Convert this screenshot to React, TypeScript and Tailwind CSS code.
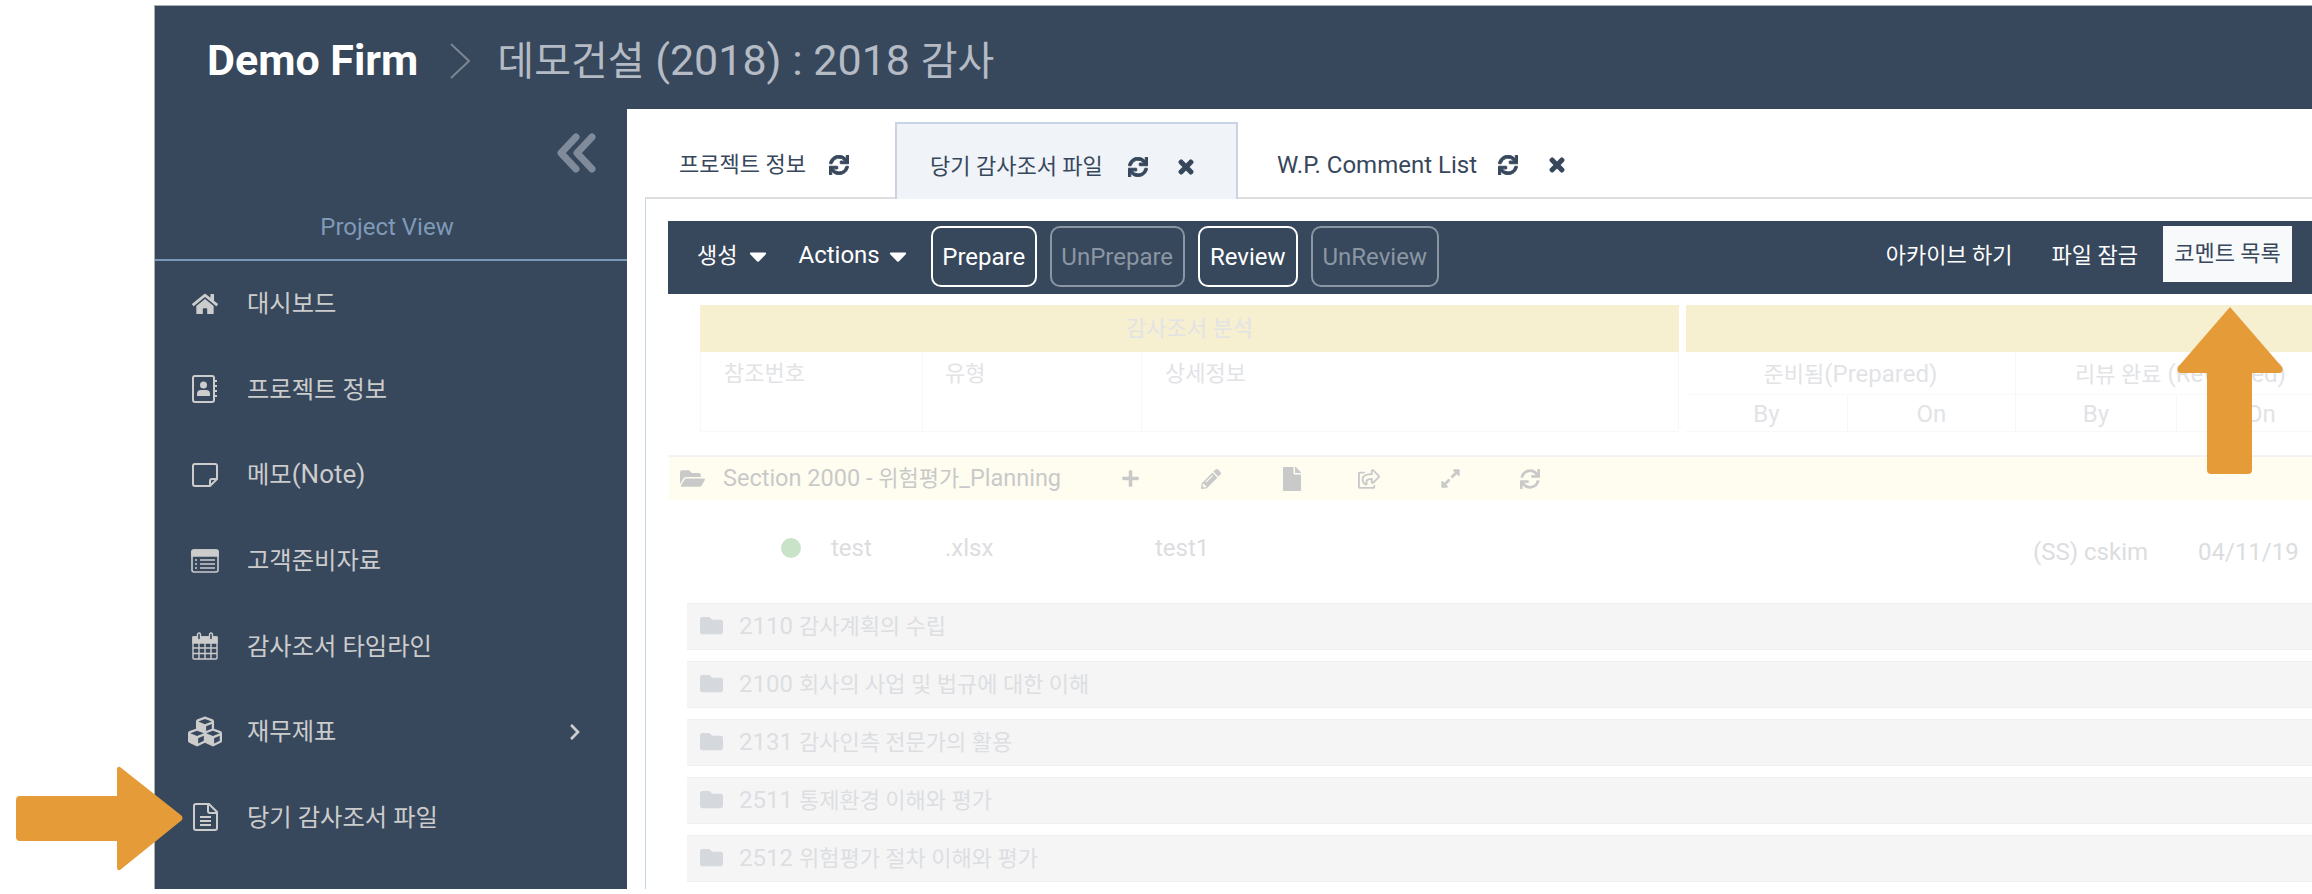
import {
  FaCaretDown,
  FaChevronRight,
  FaCubes,
  FaExpandAlt,
  FaFile,
  FaFolder,
  FaFolderOpen,
  FaHome,
  FaPencilAlt,
  FaPlus,
  FaRegShareSquare,
  FaSync,
  FaTimes,
} from 'react-icons/fa';

// the hangul in the reference runs smaller than the latin next to it
function Mix({ text, latin }: { text: string; latin: string }) {
  return (
    <>
      {text.split(/([가-힣]+(?: [가-힣]+)*)/).map((part, i) =>
        /[가-힣]/.test(part) ? <span key={i}>{part}</span> : <span key={i} className={latin}>{part}</span>
      )}
    </>
  );
}

function BookIcon() {
  return (
    <svg className="h-[28px] w-[26px]" viewBox="0 0 26 28" fill="none" stroke="currentColor" strokeWidth="2">
      <rect x="1" y="1" width="21" height="26" rx="2" />
      <path d="M22 6h3M22 11h3M22 16h3M22 21h3" />
      <circle cx="11.5" cy="10" r="3.5" fill="currentColor" stroke="none" />
      <path d="M5 21v-2q0-4 4-4h5q4 0 4 4v2z" fill="currentColor" stroke="none" />
    </svg>
  );
}

function NoteIcon() {
  return (
    <svg className="h-[24px] w-[26px]" viewBox="0 0 26 24" fill="none" stroke="currentColor" strokeWidth="2">
      <path d="M3 1h20q2 0 2 2v13l-7 7H3q-2 0-2-2V3q0-2 2-2z" />
      <path d="M18 23v-5q0-2 2-2h5" />
    </svg>
  );
}

function ListIcon() {
  return (
    <svg className="h-[24px] w-[28px]" viewBox="0 0 28 24" fill="none" stroke="currentColor" strokeWidth="1.6">
      <rect x="1" y="1" width="26" height="22" rx="2" />
      <path d="M1 3q0-2 2-2h22q2 0 2 2v4H1z" fill="currentColor" />
      <path d="M9 11h15M9 15h15M9 19h15" />
      <path d="M4 11h2M4 15h2M4 19h2" />
    </svg>
  );
}

function CalendarIcon() {
  return (
    <svg className="h-[28px] w-[26px]" viewBox="0 0 26 28" fill="none" stroke="currentColor" strokeWidth="1.4">
      <path d="M1 5h24v6H1z" fill="currentColor" />
      <rect x="1" y="5" width="24" height="22" rx="1" />
      <path d="M1 16h24M1 21.500h24M7 11v16M13 11v16M19 11v16" />
      <rect x="5.500" y="1" width="3" height="7" rx="1.500" fill="#37475c" />
      <rect x="17.500" y="1" width="3" height="7" rx="1.500" fill="#37475c" />
    </svg>
  );
}

function FileIcon() {
  return (
    <svg className="h-[28px] w-[25px]" viewBox="0 0 25 28" fill="none" stroke="currentColor" strokeWidth="2">
      <path d="M3 1h13l8 8v16q0 2-2 2H3q-2 0-2-2V3q0-2 2-2z" />
      <path d="M15 1v7q0 2 2 2h7" />
      <path d="M7 14h11M7 18h11M7 22h11" />
    </svg>
  );
}

const menu = [
  { label: '대시보드', icon: <FaHome className="text-[26px]" /> },
  { label: '프로젝트 정보', icon: <BookIcon /> },
  { label: '메모(Note)', icon: <NoteIcon /> },
  { label: '고객준비자료', icon: <ListIcon /> },
  { label: '감사조서 타임라인', icon: <CalendarIcon /> },
  { label: '재무제표', icon: <FaCubes className="text-[35px]" />, more: true },
  { label: '당기 감사조서 파일', icon: <FileIcon /> },
  { label: '', icon: <FileIcon /> },
];

const folders = [
  '2110 감사계획의 수립',
  '2100 회사의 사업 및 법규에 대한 이해',
  '2131 감사인측 전문가의 활용',
  '2511 통제환경 이해와 평가',
  '2512 위험평가 절차 이해와 평가',
];

function ToolButton({ label, width, off }: { label: string; width: string; off?: boolean }) {
  return (
    <button
      className={`h-[61px] ${width} rounded-[10px] border-2 text-center text-[24px] ${
        off ? 'border-[#8b96a3] text-[#8b96a3]' : 'border-white text-white'
      }`}
    >
      {label}
    </button>
  );
}

function TabRefresh({ className }: { className: string }) {
  return <FaSync className={className} stroke="currentColor" strokeWidth={24} />;
}

function TabClose({ className }: { className: string }) {
  return <FaTimes className={className} stroke="currentColor" strokeWidth={36} />;
}

export default function App() {
  return (
    <div className="relative h-[894px] overflow-hidden bg-white pl-[154px] pt-[5px] font-['Roboto','Noto_Sans_CJK_KR',sans-serif]">
      <div className="flex h-[884px] flex-col border-l border-t border-[#a9aeb5] bg-[#37475c]">
        {/* Top bar */}
        <header className="flex h-[103px] shrink-0 items-center pl-[52px] pt-[6px]">
          <span className="text-[43px] font-bold text-white">Demo Firm</span>
          <svg className="ml-[31px] h-[36px] w-[22px]" viewBox="0 0 22 36" fill="none" stroke="#7c8795" strokeWidth="2">
            <path d="M2 1l18 17L2 35" />
          </svg>
          <span className="ml-[26px] text-[40px] text-[#b4bbc4]">
            <Mix text="데모건설 (2018) : 2018 감사" latin="text-[43px]" />
          </span>
        </header>

        <div className="flex min-h-0 flex-1">
          {/* Sidebar */}
          <aside className="w-[472px] shrink-0 overflow-hidden">
            <div className="flex h-[64px] items-end justify-end pr-[31px]">
              <svg className="h-[40px] w-[40px]" viewBox="0 0 40 40" fill="none" stroke="#7f8b9a" strokeWidth="7" strokeLinecap="round" strokeLinejoin="round">
                <path d="M20 4L5 20l15 16" />
                <path d="M36 4L21 20l15 16" />
              </svg>
            </div>
            <div className="flex h-[88px] items-end justify-center border-b-2 border-[#7b98ba] pb-[14px] pr-[8px] text-[24px] text-[#7f9ab8]">
              Project View
            </div>
            <nav>
              {menu.map((item, i) => (
                <div key={i} className="flex h-[85.6px] items-center pl-[33px] text-[#cccccc]">
                  <span className="flex w-[34px] justify-center">{item.icon}</span>
                  <span className="ml-[25px] flex-1 text-[24.3px]">
                    <Mix text={item.label} latin="text-[26px]" />
                  </span>
                  {item.more && <FaChevronRight className="mr-[43px] text-[18px]" />}
                </div>
              ))}
            </nav>
          </aside>

          {/* Main */}
          <main className="min-w-0 flex-1 overflow-hidden bg-white pl-[18px]">
            <div className="flex h-[90px] items-end border-b-2 border-[#dddddd] text-[22px] text-[#37475c]">
              <div className="flex h-[75px] w-[250px] items-center pl-[34px] pt-[10px]">
                프로젝트 정보
                <TabRefresh className="ml-[23px] text-[20px]" />
              </div>
              <div className="-mb-[2px] flex h-[77px] w-[343px] items-center border-2 border-b-0 border-[#c8d4e3] bg-[#f0f3f7] pl-[33px] pt-[10px]">
                당기 감사조서 파일
                <TabRefresh className="ml-[25px] text-[20px]" />
                <TabClose className="ml-[28px] text-[20px]" />
              </div>
              <div className="flex h-[75px] items-center pl-[39px] pt-[10px]">
                <span className="text-[24px]">W.P. Comment List</span>
                <TabRefresh className="ml-[21px] text-[20px]" />
                <TabClose className="ml-[29px] text-[20px]" />
              </div>
            </div>

            <div className="h-full border-l border-[#c8d4e3] pl-[22px] pt-[22px]">
              {/* Toolbar */}
              <div className="flex h-[73px] items-center bg-[#37475c] pb-[2px] pl-[29px] pr-[20px] text-[22px] text-white">
                <span className="-mt-[3px]">생성</span>
                <FaCaretDown className="-mt-[2px] ml-[7px] text-[28px]" />
                <span className="-mt-[3px] ml-[26px] text-[24px]">Actions</span>
                <FaCaretDown className="-mt-[2px] ml-[4px] text-[28px]" />
                <div className="ml-[19px] flex gap-[13px]">
                  <ToolButton label="Prepare" width="w-[106px]" />
                  <ToolButton label="UnPrepare" width="w-[135px]" off />
                  <ToolButton label="Review" width="w-[100px]" />
                  <ToolButton label="UnReview" width="w-[128px]" off />
                </div>
                <span className="ml-auto -mt-[3px]">아카이브 하기</span>
                <span className="-mt-[3px] ml-[39px]">파일 잠금</span>
                <span className="-mt-[6px] ml-[25px] flex h-[56px] w-[129px] items-center justify-center bg-[#f7f9fb] text-[#37475c]">
                  코멘트 목록
                </span>
              </div>

              {/* Table head */}
              <div className="ml-[32px] mt-[11px] flex gap-[7px] text-[22px] text-[#e2e3e6]">
                <div className="w-[979px] shrink-0">
                  <div className="flex h-[47px] items-center justify-center bg-[#f6efd0]">감사조서 분석</div>
                  <div className="flex h-[80px] border border-t-0 border-[#f8f8f8]">
                    <div className="w-[222px] border-r border-[#f8f8f8] pl-[23px] pt-[5px]">참조번호</div>
                    <div className="w-[219px] border-r border-[#f8f8f8] pl-[22px] pt-[5px]">유형</div>
                    <div className="flex-1 pl-[23px] pt-[5px]">상세정보</div>
                  </div>
                </div>
                <div className="flex-1">
                  <div className="h-[47px] bg-[#f6efd0]" />
                  <div className="flex h-[80px] border-b border-[#f8f8f8]">
                    {['준비됨(Prepared)', '리뷰 완료 (Reviewed)'].map((title, i) => (
                      <div key={title} className="w-[330px] shrink-0 border-r border-[#f8f8f8] text-center">
                        <div className="flex h-[43px] items-center justify-center whitespace-nowrap border-b border-[#f8f8f8] pt-[1px]">
                          <span><Mix text={title} latin="text-[24px]" /></span>
                        </div>
                        <div className="flex h-[36px] items-center text-[24px]">
                          <div className={`${i === 0 ? 'w-[162px]' : 'w-[161px]'} h-full border-r border-[#f8f8f8] leading-[38px]`}>By</div>
                          <div className="h-full flex-1 leading-[38px]">On</div>
                        </div>
                      </div>
                    ))}
                  </div>
                </div>
              </div>

              {/* Section */}
              <div className="ml-px mt-[23px] flex h-[45px] items-center border-t-2 border-[#f3f3f3] bg-[#fffdf0] pl-[11px] text-[22px] text-[#c9c9c9]">
                <FaFolderOpen className="text-[25px]" />
                <span className="ml-[18px] w-[398px] shrink-0">
                  <Mix text="Section 2000 - 위험평가_Planning" latin="text-[23.500px]" />
                </span>
                <span className="flex w-[80px] shrink-0"><FaPlus className="text-[19px]" /></span>
                <span className="flex w-[79px] shrink-0"><FaPencilAlt className="text-[20px]" /></span>
                <span className="flex w-[78px] shrink-0"><FaFile className="text-[24px]" /></span>
                <span className="flex w-[82px] shrink-0"><FaRegShareSquare className="text-[22px]" /></span>
                <span className="flex w-[80px] shrink-0"><FaExpandAlt className="text-[21px]" /></span>
                <FaSync className="text-[20px]" />
              </div>

              {/* File row */}
              <div className="flex h-[103px] items-center pl-[113px] text-[24px] text-[#dcdde0]">
                <span className="-mt-[8px] h-[20px] w-[20px] rounded-full bg-[#c9e3c9]" />
                <span className="-mt-[8px] ml-[30px] w-[114px]">test</span>
                <span className="-mt-[8px] w-[210px]">.xlsx</span>
                <span className="-mt-[8px] w-[878px]">test1</span>
                <span className="w-[165px]">(SS) cskim</span>
                <span>04/11/19</span>
              </div>

              {/* Folders */}
              <div className="ml-[19px] flex flex-col gap-[11px]">
                {folders.map((name) => (
                  <div
                    key={name}
                    className="flex h-[47px] items-center border-y border-[#f0f0f0] bg-[#f5f5f5] pb-[2px] pl-[13px] text-[22px] text-[#dcdee2]"
                  >
                    <FaFolder className="text-[23px] text-[#d5d8dd]" />
                    <span className="ml-[16px]">
                      <Mix text={name} latin="text-[24px]" />
                    </span>
                  </div>
                ))}
              </div>
            </div>
          </main>
        </div>
      </div>

      {/* Callout arrows */}
      <svg className="absolute left-[16px] top-[766px] h-[105px] w-[167px]" viewBox="0 0 167 105" fill="#e59b37">
        <path d="M4 30h97V4q0-4 3-3l62 49q1 2 0 4l-62 50q-3 1-3-3V75H4q-4 0-4-4V34q0-4 4-4z" />
      </svg>
      <svg className="absolute left-[2177px] top-[307px] h-[167px] w-[106px]" viewBox="0 0 106 167" fill="#e59b37">
        <path d="M53 0l52 60q2 6-3 6H75v97q0 4-4 4H34q-4 0-4-4V66H4q-5 0-3-6z" />
      </svg>
    </div>
  );
}
